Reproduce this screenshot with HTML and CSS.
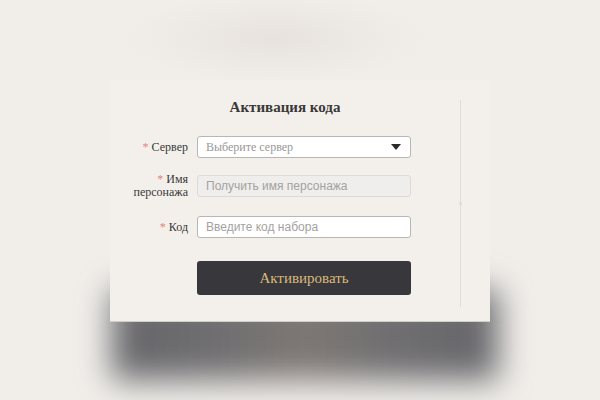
FILE: index.html
```html
<!DOCTYPE html>
<html lang="ru">
<head>
<meta charset="utf-8">
<title>Активация кода</title>
<link rel="stylesheet" href="styles.css">
</head>
<body>
<div class="stage">
  <div class="card-wrap">
    <div class="card">
      <div class="form">
        <h1 class="title">Активация кода</h1>
        <div class="row row-server">
          <label class="label"><span class="req">*</span> Сервер</label>
          <div class="select">
            <span class="select-text">Выберите сервер</span>
            <svg class="caret" width="10" height="6" viewBox="0 0 10 6"><path d="M0 0H10L5 6Z" fill="#2a2a2a"/></svg>
          </div>
        </div>
        <div class="row row-name">
          <label class="label label-two"><span class="req">*</span> Имя<br>персонажа</label>
          <input class="field field-disabled" type="text" placeholder="Получить имя персонажа" disabled>
        </div>
        <div class="row row-code">
          <label class="label"><span class="req">*</span> Код</label>
          <input class="field" type="text" placeholder="Введите код набора">
        </div>
        <div class="row row-btn">
          <span class="label"></span>
          <button class="btn" type="button">Активировать</button>
        </div>
      </div>
      <div class="divider"><span class="dot"></span></div>
    </div>
  </div>
</div>
</body>
</html>
```
FILE: styles.css
```css
html, body {
  margin: 0;
  padding: 0;
}
body {
  width: 600px;
  height: 400px;
  overflow: hidden;
  background:
    radial-gradient(ellipse 150px 45px at 275px 38px, #e7e2dd 0%, rgba(231,226,221,0) 100%),
    #f1eeea;
  font-family: "Liberation Serif", "DejaVu Serif", serif;
}
.stage {
  display: flex;
  justify-content: center;
  padding-top: 80px;
}
.card-wrap {
  position: relative;
  width: 380px;
}
.card-wrap::before {
  content: "";
  position: absolute;
  left: 2px;
  right: -8px;
  top: 210px;
  bottom: -58px;
  background: linear-gradient(90deg, #66666a 0%, #6e6d70 25%, #7e7874 50%, #6e6d70 75%, #66666a 100%);
  filter: blur(16px);
  z-index: 0;
}
.card {
  position: relative;
  z-index: 1;
  height: 241px;
  background: #f3f0ec;
  border-bottom: 1px solid #d2cec9;
  display: flex;
}
.form {
  width: 350px;
  padding-top: 17px;
}
.title {
  margin: 0 0 19px;
  font-family: "Liberation Serif", "DejaVu Serif", serif;
  font-size: 15px;
  line-height: 20px;
  font-weight: bold;
  color: #3a3836;
  text-align: center;
}
.row {
  display: flex;
  align-items: center;
}
.row-server { margin-bottom: 15px; }
.row-name { margin-bottom: 17px; }
.row-code { margin-bottom: 23px; }
.label {
  width: 78px;
  flex: none;
  margin-right: 9px;
  text-align: right;
  font-family: "Liberation Serif", "DejaVu Serif", serif;
  font-size: 12px;
  line-height: 13px;
  color: #3a3836;
}
.req {
  color: #e2857c;
}
.select, .field {
  box-sizing: border-box;
  width: 214px;
  height: 22px;
  border: 1px solid #b9b6b3;
  border-radius: 3px;
  background: #fff;
}
.select {
  display: flex;
  align-items: center;
  justify-content: space-between;
  padding: 0 9px 0 8px;
}
.select-text {
  font-family: "Liberation Serif", "DejaVu Serif", serif;
  font-size: 12px;
  color: #9a9896;
  padding-top: 1px;
}
.caret {
  display: block;
}
.field {
  padding: 0 8px;
  font-family: "Liberation Sans", Arial, sans-serif;
  font-size: 12px;
  color: #333;
  outline: none;
}
.field::placeholder {
  color: #a3a2a0;
  opacity: 1;
}
.field-disabled {
  background: #efeeec;
  border-color: #dddbd8;
}
.btn {
  width: 214px;
  height: 34px;
  border: 0;
  border-radius: 3px;
  background: #38383c;
  color: #dcb97a;
  font-family: "Liberation Serif", "DejaVu Serif", serif;
  font-size: 15px;
  padding: 0;
  cursor: pointer;
}
.divider {
  position: relative;
  width: 1px;
  margin-top: 20px;
  height: 207px;
  background: #e1ddd8;
}
.dot {
  position: absolute;
  left: -1px;
  top: 102px;
  width: 3px;
  height: 3px;
  border-radius: 50%;
  background: #dedad5;
}
```
